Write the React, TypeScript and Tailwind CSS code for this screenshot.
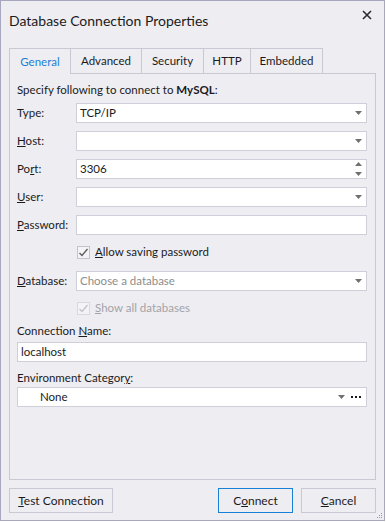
import React from 'react';

const font = "font-['Segoe_UI','Lato',sans-serif]";

function Arrow() {
  return (
    <svg width="7" height="4" viewBox="0 0 7 4" className="shrink-0">
      <path d="M0 0H7L3.5 4Z" fill="#707070" />
    </svg>
  );
}

function Field({ label, value, placeholder, arrow, spin }: { label: React.ReactNode; value?: string; placeholder?: string; arrow?: boolean; spin?: boolean }) {
  return (
    <div className="flex items-center mt-[8px] h-[20px]">
      <div className="w-[59px] text-[#1b1b1b]">{label}</div>
      <div className="flex-1 h-[20px] bg-white border border-[#cfcfd9] flex items-center pl-[3px] pr-[4px]">
        <span className={`flex-1 ${placeholder ? 'text-[#8d8d8d]' : 'text-[#1b1b1b]'}`}>{value || placeholder}</span>
        {arrow && <Arrow />}
        {spin && (
          <svg width="7" height="14" viewBox="0 0 7 14" className="shrink-0">
            <path d="M0 4H7L3.5 0Z" fill="#707070" />
            <path d="M0 10H7L3.5 14Z" fill="#707070" />
          </svg>
        )}
      </div>
    </div>
  );
}

function Check({ label, disabled }: { label: React.ReactNode; disabled?: boolean }) {
  return (
    <div className="flex items-center h-[18px] pl-[60px]">
      <div className={`w-[13px] h-[13px] border ${disabled ? 'border-[#d8d8e0]' : 'border-[#c4c4cc]'} bg-[#f4f4f7] flex items-center justify-center`}>
        <svg width="11" height="11" viewBox="0 0 11 11">
          <path d="M1.5 6L4 8.5L9.5 2" fill="none" stroke={disabled ? '#c2c2c8' : '#5a5a5a'} strokeWidth="1.3" />
        </svg>
      </div>
      <span className={`ml-[5px] ${disabled ? 'text-[#a3a3a8]' : 'text-[#1b1b1b]'}`}>{label}</span>
    </div>
  );
}

const tabs = ['General', 'Advanced', 'Security', 'HTTP', 'Embedded'];
const tabW = [60, 70, 61, 46, 72];

export default function App() {
  return (
    <div className={`${font} text-[11.5px] w-[385px] h-[521px] border border-[#a7a7bf] bg-[#eeedf2] flex flex-col relative`}>
      <div className="flex justify-between h-[47px] pl-[8px] pr-[12px]">
        <div className="pt-[10px] text-[14px] leading-[20px] text-[#1b1b1b]">Database Connection Properties</div>
        <svg width="10" height="10" viewBox="0 0 10 10" className="mt-[9px]">
          <path d="M1 1L9 9M9 1L1 9" stroke="#2b2b2b" strokeWidth="1.6" />
        </svg>
      </div>

      <div className="flex ml-[8px] h-[26px]">
        {tabs.map((t, i) => (
          <div
            key={t}
            style={{ width: tabW[i] + 1 }}
            className={`h-[26px] flex items-center justify-center border-t border-l border-[#c9c9d4] ${i === tabs.length - 1 ? 'border-r' : ''} ${i === 0 ? 'text-[#1c7fd6] border-b-0' : 'text-[#1b1b1b] border-b'}`}
          >
            {t}
          </div>
        ))}
        <div className="flex-1 border-b border-[#c9c9d4] mr-[8px]" />
      </div>

      <div className="ml-[8px] mr-[8px] h-[406px] border border-t-0 border-[#c9c9d4] pl-[7px] pr-[8px] flex flex-col">
        <div className="mt-[6px] h-[20px] flex items-center text-[#1b1b1b]">
          Specify following to connect to&nbsp;<b>MySQL</b>:
        </div>
        <div className="-mt-[5px]">
          <Field label="Type:" value="TCP/IP" arrow />
          <Field label={<><u>H</u>ost:</>} arrow />
          <Field label={<>Po<u>r</u>t:</>} value="3306" spin />
          <Field label={<><u>U</u>ser:</>} arrow />
          <Field label={<><u>P</u>assword:</>} />
        </div>
        <div className="mt-[8px]">
          <Check label={<><u>A</u>llow saving password</>} />
        </div>
        <div className="mt-[2px]">
          <Field label={<><u>D</u>atabase:</>} placeholder="Choose a database" arrow />
        </div>
        <div className="mt-[8px]">
          <Check label={<><u>S</u>how all databases</>} disabled />
        </div>
        <div className="mt-[6px] h-[16px] leading-[16px] text-[#1b1b1b]">
          Connection <u>N</u>ame:
        </div>
        <div className="mt-[3px] h-[20px] bg-white border border-[#cfcfd9] flex items-center pl-[3px] text-[#1b1b1b]">
          localhost
        </div>
        <div className="mt-[8px] h-[16px] leading-[16px] text-[#1b1b1b]">
          Environment Categor<u>y</u>:
        </div>
        <div className="mt-[1px] h-[20px] bg-white border border-[#cfcfd9] flex items-center pl-[22px] pr-[4px] text-[#1b1b1b]">
          <span className="flex-1">None</span>
          <Arrow />
          <svg width="10" height="3" viewBox="0 0 10 3" className="ml-[6px] mr-[1px]">
            <rect x="0" y="0" width="2" height="2" fill="#1b1b1b" />
            <rect x="4" y="0" width="2" height="2" fill="#1b1b1b" />
            <rect x="8" y="0" width="2" height="2" fill="#1b1b1b" />
          </svg>
        </div>
      </div>

      <div className="flex items-center mt-[8px] pl-[8px] pr-[8px]">
        <button className="w-[104px] h-[25px] border border-[#c9c9d4] text-[12px] text-[#1b1b1b]">
          <u>T</u>est Connection
        </button>
        <div className="flex-1" />
        <button className="w-[75px] h-[25px] border border-[#1a7fd6] text-[12px] text-[#1b1b1b]">
          C<u>o</u>nnect
        </button>
        <button className="ml-[8px] w-[75px] h-[25px] border border-[#c9c9d4] text-[12px] text-[#1b1b1b]">
          <u>C</u>ancel
        </button>
      </div>

      <svg width="7" height="7" viewBox="0 0 7 7" className="absolute right-[1px] bottom-[1px]">
        <rect x="5" y="1" width="1" height="1" fill="#9a9aa8" />
        <rect x="3" y="3" width="1" height="1" fill="#9a9aa8" />
        <rect x="5" y="3" width="1" height="1" fill="#9a9aa8" />
        <rect x="1" y="5" width="1" height="1" fill="#9a9aa8" />
        <rect x="3" y="5" width="1" height="1" fill="#9a9aa8" />
        <rect x="5" y="5" width="1" height="1" fill="#9a9aa8" />
      </svg>
    </div>
  );
}
